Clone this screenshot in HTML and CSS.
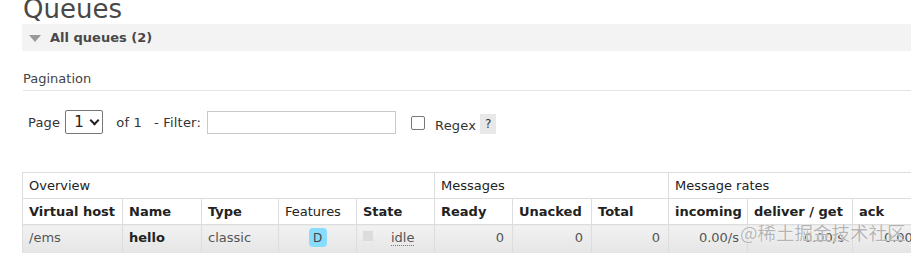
FILE: index.html
```html
<!DOCTYPE html>
<html lang="en">
<head>
    <meta charset="UTF-8">
    <title>Queues</title>
    <link rel="stylesheet" href="styles.css">
</head>
<body>

<div class="main">
    <h1>Queues</h1>
    <div class="section">
        <h2 class="section-head"><span class="toggle"></span>All queues (2)</h2>
        <div class="section-body">
            <h3>Pagination</h3>
            <div class="pager">
                <label>Page</label>
                <div class="select">1 <span class="chev"></span></div>
                <span>of 1</span>
                <label>- Filter:</label>
                <div class="filter"></div>
                <div class="check"></div>
                <label class="regex">Regex</label>
                <span class="help">?</span>
            </div>

            <table class="list">
                <colgroup>
                    <col style="width:100px"><col style="width:79px"><col style="width:77px">
                    <col style="width:78px"><col style="width:78px"><col style="width:78px">
                    <col style="width:79px"><col style="width:77px"><col style="width:79px">
                    <col style="width:105px"><col style="width:80px">
                </colgroup>
                <tr class="group">
                    <th colspan="5">Overview</th>
                    <th colspan="3">Messages</th>
                    <th colspan="3">Message rates</th>
                </tr>
                <tr class="heads">
                    <th>Virtual host</th>
                    <th>Name</th>
                    <th>Type</th>
                    <th class="plain">Features</th>
                    <th>State</th>
                    <th>Ready</th>
                    <th>Unacked</th>
                    <th>Total</th>
                    <th>incoming</th>
                    <th>deliver / get</th>
                    <th>ack</th>
                </tr>
                <tr class="row">
                    <td>/ems</td>
                    <td class="name">hello</td>
                    <td>classic</td>
                    <td class="c"><abbr class="badge">D</abbr></td>
                    <td><span class="dot"></span><span class="state">idle</span></td>
                    <td class="r">0</td>
                    <td class="r">0</td>
                    <td class="r">0</td>
                    <td class="r">0.00/s</td>
                    <td class="r">0.00/s</td>
                    <td class="r">0.00/s</td>
                </tr>
            </table>
        </div>
    </div>
</div>

<div class="watermark">@稀土掘金技术社区</div>

</body>
</html>
```

FILE: styles.css
```css
body {
    margin: 0;
    font-family: Verdana, "DejaVu Sans", sans-serif;
    font-size: 13px;
    color: #444;
    background: #fff;
    overflow: hidden;
}
.main {
    padding-left: 22px;
}
h1 {
    margin: -5px 0 0 1px;
    font-size: 26px;
    font-weight: normal;
    line-height: 29px;
    color: #484848;
}
.section-head {
    margin: 0;
    height: 27px;
    display: flex;
    align-items: center;
    background: #f3f3f3;
    font-size: 13px;
    font-weight: bold;
    color: #484848;
}
.toggle {
    width: 0;
    height: 0;
    margin: 1px 9px 0 7px;
    border-left: 6px solid transparent;
    border-right: 6px solid transparent;
    border-top: 7px solid #999;
}
.section-body h3 {
    margin: 20px 0 0 1px;
    padding-bottom: 4px;
    font-size: 13px;
    font-weight: normal;
    border-bottom: 1px solid #e4e4e4;
}
.pager {
    display: flex;
    align-items: center;
    height: 24px;
    margin-top: 19px;
    padding-left: 6px;
    color: #333;
    letter-spacing: 0.2px;
}
.select {
    display: flex;
    align-items: center;
    width: 38px;
    height: 24px;
    margin: 0 13px 0 5px;
    padding-left: 8px;
    box-sizing: border-box;
    border: 1px solid #767676;
    border-radius: 2px;
    font-size: 15px;
    color: #222;
}
.chev {
    width: 5px;
    height: 5px;
    margin: -3px 0 0 7px;
    border-right: 2px solid #222;
    border-bottom: 2px solid #222;
    transform: rotate(45deg);
}
.pager span + label {
    margin-left: 12px;
}
.filter {
    width: 189px;
    height: 23px;
    box-sizing: border-box;
    border: 1px solid #c8c8c8;
    margin-left: 6px;
}
.check {
    width: 12px;
    height: 12px;
    margin: 0 10px 0 15px;
    border: 1px solid #777;
    border-radius: 2px;
    position: relative;
    top: 1px;
}
.regex {
    position: relative;
    top: 3px;
}
.help {
    margin-left: 4px;
    width: 16px;
    height: 20px;
    line-height: 20px;
    text-align: center;
    background: #e8e8e8;
    font-size: 12px;
    position: relative;
    top: 2px;
}
table.list {
    margin-top: 38px;
    border-collapse: collapse;
    table-layout: fixed;
    width: 910px;
    color: #222;
}
.list th, .list td {
    border: 1px solid #ddd;
    padding: 0 6px;
    text-align: left;
    white-space: nowrap;
    overflow: hidden;
}
.list tr.group th {
    height: 25px;
    font-weight: normal;
}
.list tr.heads th {
    height: 25px;
    font-weight: bold;
}
.list tr.heads th.plain {
    font-weight: normal;
}
.list tr.row td {
    height: 24px;
    padding-bottom: 4px;
    color: #555;
    background: linear-gradient(#f2f2f2, #e5e5e5);
}
.list td.name {
    font-weight: bold;
}
.list tr.row td.name {
    color: #222;
}
.list td.r {
    text-align: right;
    padding-right: 8px;
}
.list td.c {
    text-align: center;
}
.badge {
    display: inline-block;
    width: 18px;
    height: 19px;
    line-height: 21px;
    border-radius: 4px;
    background: #88ddff;
    color: #444;
    text-decoration: none;
    font-size: 12px;
    text-align: center;
}
.dot {
    display: inline-block;
    width: 10px;
    height: 10px;
    background: #dcdcdc;
    vertical-align: 1px;
    margin-right: 18px;
}
.state {
    border-bottom: 1px dotted #777;
}
.watermark {
    position: absolute;
    left: 740px;
    top: 219px;
    font-family: "Noto Sans CJK SC", sans-serif;
    font-size: 18.5px;
    color: rgba(130, 130, 130, 0.6);
    text-shadow: 0 0 1px #fff, 0 0 1px #fff;
}
```
